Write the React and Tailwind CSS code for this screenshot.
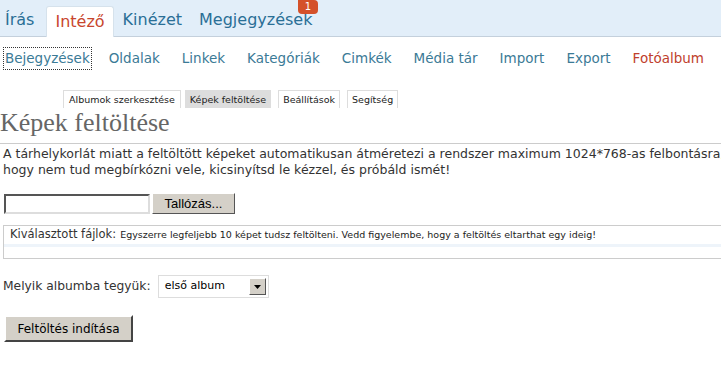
export default function App() {
  const subnav = ["Oldalak", "Linkek", "Kategóriák", "Cimkék", "Média tár", "Import", "Export"];
  return (
    <div className="w-[721px] h-[384px] overflow-hidden bg-white font-['DejaVu_Sans',sans-serif] text-[#333]">
      <div className="relative h-[37px] bg-[#e2eef9] border-b border-[#c4d0dc] flex items-end pl-[5px]">
        <span className="text-[16px] text-[#2a6f96] pb-[4px] mr-[12px]">Írás</span>
        <span className="h-[31px] px-[8px] bg-white border border-b-0 border-[#d6e2ec] rounded-t-[3px] text-[16px] text-[#c8462e] flex items-end pb-[3px] mb-[-1px]">Intéző</span>
        <span className="text-[16px] text-[#2a6f96] pb-[4px] ml-[9px]">Kinézet</span>
        <span className="text-[16px] text-[#2a6f96] pb-[4px] ml-[17px]">Megjegyzések</span>
        <span className="absolute left-[298px] top-0 w-[20px] h-[14px] rounded-b-[4px] rounded-tr-[4px] bg-[#d4512a] text-white text-[10px] leading-[13px] text-center">1</span>
      </div>
      <div className="flex items-center h-[40px] pt-[3px] text-[13.5px] text-[#3b7a96]">
        <span className="ml-[4px] outline outline-1 outline-dotted outline-[#333] px-[1px]">Bejegyzések</span>
        <div className="flex gap-[22px] ml-[18px]">
          {subnav.map((s) => (
            <span key={s}>{s}</span>
          ))}
          <span className="text-[#c0402c]">Fotóalbum</span>
        </div>
      </div>
      <div className="flex gap-[4px] pl-[63px] mt-[13px] text-[9.5px] text-[#222] leading-[17px]">
        <span className="px-[5px] border border-b-0 border-[#ddd]">Albumok szerkesztése</span>
        <span className="px-[4px] border border-b-0 border-[#ddd] bg-[#ddd]">Képek feltöltése</span>
        <span className="px-[4px] border border-b-0 border-[#ddd] ml-[3px]">Beállítások</span>
        <span className="px-[4px] border border-b-0 border-[#ddd] ml-[3px]">Segítség</span>
      </div>
      <h1 className="font-['Liberation_Serif',serif] text-[26px] leading-[28px] text-[#666] mt-[1px]">Képek feltöltése</h1>
      <div className="border-t border-[#ccc] mt-[6px] pt-[2px] pl-[3px] text-[12.5px] leading-[16px] whitespace-nowrap">
        <p>A tárhelykorlát miatt a feltöltött képeket automatikusan átméretezi a rendszer maximum 1024*768-as felbontásra, és ha a rendszer úgy észleli,</p>
        <p>hogy nem tud megbírkózni vele, kicsinyítsd le kézzel, és próbáld ismét!</p>
      </div>
      <div className="flex items-center mt-[15px] ml-[4px]">
        <input className="w-[146px] h-[20px] border-2 border-t-[#555] border-l-[#555] border-b-[#ddd] border-r-[#ddd] bg-white" />
        <button className="ml-[2px] w-[83px] h-[21px] bg-[#d4d0c8] border border-t-white border-l-white border-b-[#555] border-r-[#555] text-[13px] font-['Liberation_Sans',sans-serif] text-black">Tallózás...</button>
      </div>
      <div className="mt-[11px] ml-[3px] h-[34px] border border-r-0 border-[#ccc]">
        <div className="h-[21px] pl-[6px] flex items-center border-b-[3px] border-[#eef4fa] whitespace-nowrap">
          <span className="text-[11.5px]">Kiválasztott fájlok:</span>
          <span className="text-[9.5px] ml-[4px] text-[#222]">Egyszerre legfeljebb 10 képet tudsz feltölteni. Vedd figyelembe, hogy a feltöltés eltarthat egy ideig!</span>
        </div>
      </div>
      <div className="flex items-center mt-[16px] ml-[3px] text-[12.3px]">
        <span>Melyik albumba tegyük:</span>
        <div className="ml-[7px] w-[111px] h-[23px] border border-[#ddd] flex items-center justify-between pl-[6px] pr-[2px]">
          <span className="text-[11px] text-black">első album</span>
          <span className="w-[17px] h-[17px] bg-[#d4d0c8] border border-t-white border-l-white border-b-[#555] border-r-[#555] flex items-center justify-center">
            <svg width="7" height="4" viewBox="0 0 7 4"><path d="M0 0h7L3.5 4z" fill="#000" /></svg>
          </span>
        </div>
      </div>
      <button className="mt-[17px] ml-[4px] w-[129px] h-[27px] bg-[#d4d0c8] border-2 border-t-white border-l-white border-b-[#444] border-r-[#444] text-[12px] text-black">Feltöltés indítása</button>
    </div>
  );
}
